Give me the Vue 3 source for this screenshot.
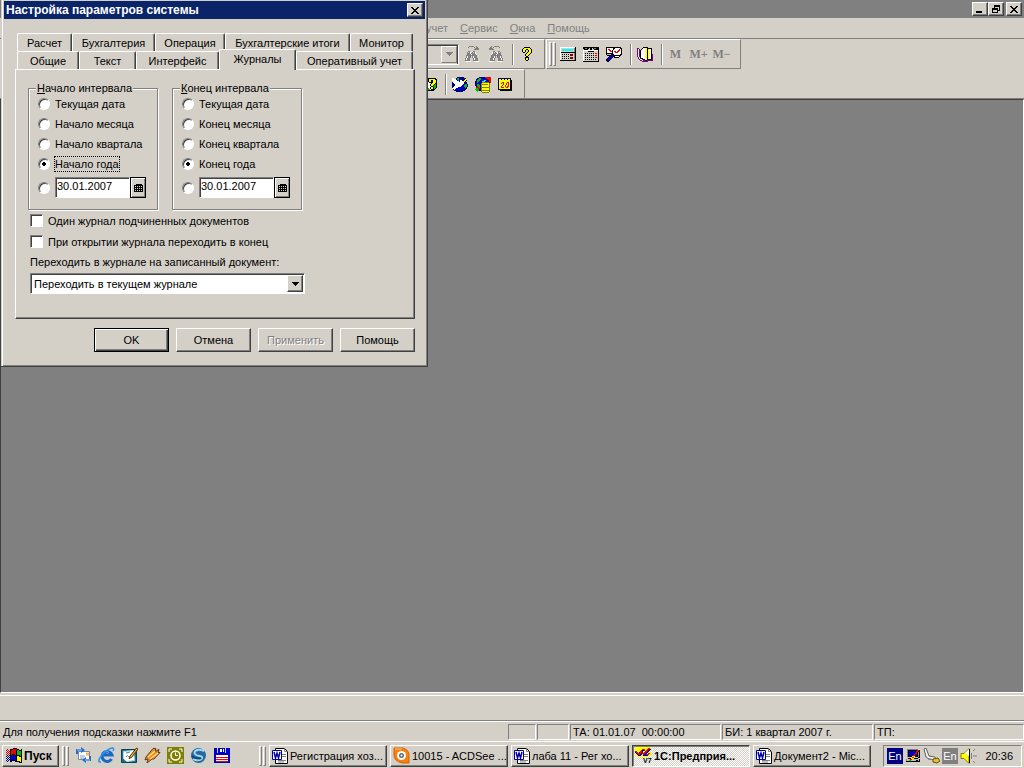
<script setup>
import { h, ref } from 'vue'

const palette = {
  k: '#000', w: '#fff', g: '#808080', s: '#c0c0c0', f: '#d4d0c8', r: '#f00000', m: '#800000',
  y: '#ffff00', b: '#0000c8', n: '#000080', c: '#00ffff', e: '#00c000', o: '#808000', p: '#800080', d: '#404040'
}

const art = {
  close: ['kk....kk', '.kk..kk.', '..kkkk..', '...kk...', '..kkkk..', '.kk..kk.', 'kk....kk'],
  minimize: ['........', '........', '........', '........', '........', 'kkkkkk..', 'kkkkkk..'],
  restore: ['..kkkkkk', '..kkkkkk', '..k....k', 'kkkkkk.k', 'kkkkkk.k', 'k....kkk', 'k....k..', 'kkkkkk..'],
  arrow: ['kkkkkkk', '.kkkkk.', '..kkk..', '...k...'],
  arrowGray: ['ggggggg', '.ggggg.', '..ggg..', '...g...'],
  calendar: ['..kkkkkk.', 'kkkkkkkkk', 'k.k.k.k.k', 'kkkkkkkkk', 'k.k.k.k.k', 'kkkkkkkkk', 'k.k.k.k.k', 'kkkkkkkkk'],
  findNext: ['....ggggg..g...', '...g.....g.gg..', '..........gggg.', '.........ggggg.', '...............', '...gg...gg.....', '..g.gw.g.gw....', '..gggwggggw....', '..ggggwggggw...', '.ggggggggggg...', '.gwggg.gwggg...', '.gwggg.gwggg...', 'gwggg...gwggg..', 'gwggg...gwggg..', 'ggggg...ggggg..', '.wwwww...wwwww.'],
  help: ['..kkkkkk..', '.kyyyyyyk.', 'kyyykkyyyk', 'kyyk..kyyk', 'kyyk..kyyk', '.kk..kyyyk', '....kyyyk.', '...kyyyk..', '...kyyk...', '....kk....', '...kkkk...', '...kyyk...', '...kyyk...', '....kk....'],
  calculator: ['wwwwwwwwwwwwwwwk', 'wfffffffffffffgk', 'wfcccccccccccfgk', 'wfcccccccccccfgk', 'wfffffffffffffgk', 'wkkkkkkkkkkkkkkk', 'wfffffffffffffgk', 'wfkfkfkfkfmmmfgk', 'wfffffffffmmmfgk', 'wfkfkfkfkfffffgk', 'wfffffffffmmmfgk', 'wfkfkfkfkfmmmfgk', 'wfffffffffffffgk', 'kkkkkkkkkkkkkkkk'],
  agenda: ['kkkkkkkkkkkkkkkk', 'kkggkkfkkfkggkkk', '.kkkkf.kk.fkkkkk', 'wwwwwwwwwwwwwwwk', 'wffffkkkkkkffffk', 'wffffffffffffffk', 'wfkfkfkfkfkfrrfk', 'wffffffffffffffk', 'wfkfkfkfkfkfrrfk', 'wffffffffffffffk', 'wfkfkfkfkfkfrrfk', 'wffffffffffffffk', 'wfkfkfkfkfkfkffk', 'wffffffffffffffk', 'kkkkkkkkkkkkkkkk'],
  inspect: ['kkkkkkkkkkkkkkk.', 'kwwwwwwkkwwwwwkk', 'kwrrwwwkwwwwwrwk', 'kwwrrwkwwwwwrrwk', 'kwwwrrkwrrwrrwwk', 'kwwwwwkwwrrrwwwk', 'kkkkkkkwwwwwwwwk', 'ksssskkkwwwwwwkk', '.kkkkbbkkkkkkkk.', '...kbbbkkwwwwk..', '..kbbbk.kkkkk...', '.kbbbk..........', 'kbbbk...........', 'kbbk............', '.kk.............'],
  book: ['......kkkkk.....', 'pp...kwwyykkkkk.', 'pwp.kwwwwykyywk.', 'pwpkwwwwyykwwwk.', 'pwpkwwwwwykyywk.', 'pwpkwwwwyykwwwk.', 'pwpkwwwwwykyywk.', 'pwpkwwwwyykwwwkp', 'pwpkwwwwwykyywkp', 'pwpkwwwwyykwwwkp', '.pwkwwwwyykyywkp', '.pwpkkwwwykwwwkp', '..pwwpkkwykkkkkp', '...ppwppkkpppppp', '.....pppppp.....'],
  catalog: ['...kkkkkkkkk....', '..kekyyyyyykk...', '.keekyykkyyyk...', 'keeekyykkyyyk...', 'keewwkkkkyyyk...', 'kewwwwwkyyykk...', 'kyywwwkyyykek...', 'kyyywwkyykeek...', 'kyyywwwkkeeek...', 'kkwwwwkyykeek...', '.keeewkyykek....', '..keeewkkkk.....', '...kkkkkkk......'],
  bird: ['.....nnnnnnn....', 'ww..neebnnnbnn..', 'wwwwneebbbnnnyy.', 'wwwwwnebwwnnyyk.', '.wwwwwwnwwwyyk..', 'nwwwwwwwwwwwnnn.', 'nnwwwwwwwwwwbnn.', 'nnnwwwwwwwwbbeen', 'nbnwwwwwwwbbeeen', 'nbwwwwwwwbbbeeen', 'nwwwwwbbbbbbben.', 'wwwwbbbbbbbbbnn.', '.nwnbbbbbbnnnn..', '..nnnnnnnnnnn...', '....nnnnnnn.....'],
  globe: ['....nnnnnnrrrrrr', '..nneebbbnnrrrrr', '.nneeebbbbbnnrrr', '.neeebbbbccbnnrr', 'nneebbbcccbbbnrr', 'nbebbbbooooooonr', 'nbbbbboyyyyyyyo.', 'nbeebboooooooyo.', 'nbeeeboyyyyyyyo.', '.nreeboyyyyyyyo.', '.rrrebooooooooo.', '.eerrboyyyyyyyo.', 'eeeenboyyyyyyyo.', '.eeennooooooooo.', '..e...oyyyyyyyo.', '.......ooooooo..'],
  day: ['nnnnnnnnnnnnn..', 'nyynyynyynyyk..', 'kyyyyyyyyyyykk.', 'kyyyyyyyyyyykk.', 'kyyyrryyyrrykk.', 'kyyryryyryrykk.', 'kyyyyryyryrykk.', 'kyyyryyryyrykk.', 'kyyryyyryrrykk.', 'kyyrrryyrryykk.', 'kyyyyyyyyyyykk.', 'kkkkkkkkkkkkkk.', '..kkkkkkkkkkkk.'],
  floppy: ['bbb.bbbbbbb.bbbb', 'bbb.bbwwbwb.bbbb', 'bbb.bbwwbwb.bbbb', 'bbb.bbwwbwb.bbbb', 'bbb.bbbbbbb.bbbb', 'bbbbbbbbbbbbbbbb', 'bbbbbbbbbbbbbbbb', 'bbwwwwwwwwwwwwbb', 'bbwwwwwwwwwwwwbb', 'bbrrrrrrrrrrrrbb', 'bbwwwwwwwwwwwwbb', 'bbrrrrrrrrrrrrbb', 'bbwwwwwwwwwwwwbb', 'bbrrrrrrrrrrrrbb', 'bbbbbbbbbbbbbbbb'],
  windows: ['.......kkkk.....', '.r..kkkrrrrkk..k', 'r.r.krrrrrkeekkk', '.r.rkrrrrrkeeeek', 'r.r.krrrrrkeeeek', '.r.rkrrrrrkeeeek', 'r.r.krkkkrkeeeek', '.k.kkkbbbkkkkkek', 'b.b.kbbbbbkyykkk', '.b.bkbbbbbkyyyyk', 'b.b.kbbbbbkyyyyk', '.b.bkbbbbbkyyyyk', 'b.b.kbkkkbkyyyyk', '.k..kk...kkkkkyk', '.............kkk'],
  company: ['yyyyyyyyyyyyyyyy', 'yyyyyyyyyyyyyrry', 'yyyyyyyrrryyrrbb', 'yyyyyyrbbryrrbbw', 'rryyyrrbyyrrbbyy', 'brrybrrbyrrbbyyy', 'ybrrrrbrrrbbyrry', 'yybrrbbyrbbrrryy', '.yybbbyybbbbbyyy', '..yyyyyyyyyyy...'],
  network: ['..ggggggggggg...', '..gkkkkkkkkkrrk.', '..gkbbbbbbbrrkk.', '..gkbbbbbbbrkgk.', '..gkbbbbbbrrkgk.', '..gkbbbbbrrbkgk.', '..gkbbbbrrbbkgk.', '..gkkkkyyykkkgk.', '..ssssyrryssskk.', '...kkkyyykkkk...', '.gsssrryssssssk.', '.gsseessssskksk.', '.kkkkkkkkkkkkkk.']
}
const Pixel = ({ name }) => {
  const rows = art[name]
  const width = Math.max(...rows.map(r => r.length))
  const cells = []
  rows.forEach((row, y) => [...row].forEach((c, x) => {
    if (palette[c]) cells.push(h('rect', { x, y, width: 1, height: 1, fill: palette[c] }))
  }))
  return h('svg', { width, height: rows.length, viewBox: `0 0 ${width} ${rows.length}`, 'shape-rendering': 'crispEdges', 'aria-hidden': 'true' }, cells)
}
Pixel.props = ['name']

const WordIcon = () => h('svg', { width: 16, height: 16, viewBox: '0 0 16 16', 'aria-hidden': 'true' }, [
  h('path', { d: 'M3.5 .5h9l3 3v12h-12z', fill: '#fff', stroke: '#000' }),
  h('path', { d: 'M12.5 .5v3h3M10 6.5h4M10 8.5h4M6 12.5h8M6 14h6', fill: 'none', stroke: '#808080' }),
  h('path', { d: 'M.5 2.5h9v9h-9z', fill: '#fff', stroke: '#0000a0' }),
  h('path', { d: 'M2 4l1.5 6L5 5l1.5 5L8 4', fill: 'none', stroke: '#0000a0', 'stroke-width': 1.5 })
])

const tabsBack = ['Расчет', 'Бухгалтерия', 'Операция', 'Бухгалтерские итоги', 'Монитор']
const tabsFront = ['Общие', 'Текст', 'Интерфейс', 'Журналы', 'Оперативный учет']
const activeTab = ref('Журналы')

const groups = [
  { id: 'start', key: 'Н', rest: 'ачало интервала', options: ['Текущая дата', 'Начало месяца', 'Начало квартала', 'Начало года'] },
  { id: 'end', key: 'К', rest: 'онец интервала', options: ['Текущая дата', 'Конец месяца', 'Конец квартала', 'Конец года'] }
]
const picked = ref({ start: 3, end: 3 })
const dates = ref({ start: '30.01.2007', end: '30.01.2007' })

const tasks = [
  { icon: 'word', text: 'Регистрация хоз...' },
  { icon: 'acdsee', text: '10015 - ACDSee ...' },
  { icon: 'word', text: 'лаба 11 - Рег хо...' },
  { icon: 'company', text: '1С:Предприя...', active: true },
  { icon: 'word', text: 'Документ2 - Mic...' }
]
</script>

<template>
  <div class="screen">
    <header class="app-title">
      <button class="caption" aria-label="Свернуть"><Pixel name="minimize" /></button>
      <button class="caption" aria-label="Восстановить"><Pixel name="restore" /></button>
      <button class="caption apart" aria-label="Закрыть"><Pixel name="close" /></button>
    </header>

    <nav class="menu">
      <a href="#">учет</a>
      <a href="#"><u>С</u>ервис</a>
      <a href="#"><u>О</u>кна</a>
      <a href="#"><u>П</u>омощь</a>
    </nav>

    <div class="toolbars">
      <div class="bar-row">
        <div class="bar first">
          <span class="combo"><button aria-label="Список"><Pixel name="arrowGray" /></button></span>
          <button class="tool" aria-label="Найти далее"><Pixel name="findNext" /></button>
          <button class="tool flip" aria-label="Найти ранее"><Pixel name="findNext" /></button>
          <i class="sep"></i>
          <button class="tool" aria-label="Справка"><Pixel name="help" /></button>
        </div>
        <div class="bar second">
          <i class="grip"></i><i class="grip"></i>
          <button class="tool" aria-label="Калькулятор"><Pixel name="calculator" /></button>
          <button class="tool" aria-label="Календарь"><Pixel name="agenda" /></button>
          <button class="tool" aria-label="Табло"><Pixel name="inspect" /></button>
          <i class="sep"></i>
          <button class="tool" aria-label="Книга"><Pixel name="book" /></button>
          <i class="sep"></i>
          <button class="tool mem">M</button>
          <button class="tool mem">M+</button>
          <button class="tool mem">M−</button>
        </div>
      </div>
      <div class="bar-row">
        <div class="bar third">
          <button class="tool cut" aria-label="Описание"><Pixel name="catalog" /></button>
          <i class="sep"></i>
          <button class="tool" aria-label="Почта"><Pixel name="bird" /></button>
          <button class="tool" aria-label="Интернет"><Pixel name="globe" /></button>
          <button class="tool" aria-label="Дата"><Pixel name="day" /></button>
        </div>
      </div>
    </div>

    <main class="workspace"></main>
    <div class="window-strip"></div>

    <footer class="status">
      <span class="hint">Для получения подсказки нажмите F1</span>
      <span class="pane"></span>
      <span class="pane"></span>
      <span class="pane">ТА: 01.01.07&nbsp; 00:00:00</span>
      <span class="pane">БИ: 1 квартал 2007 г.</span>
      <span class="pane">ТП:</span>
    </footer>

    <div class="taskbar">
      <button class="start"><Pixel name="windows" />Пуск</button>
      <i class="grip"></i><i class="grip"></i>
      <div class="quick">
        <button aria-label="Outlook Express">
          <svg width="17" height="17" viewBox="0 0 17 17"><path d="M3.500 4.500h11v8h-11z" fill="#fff" stroke="#7088a8" /><path d="M5 9h5M5 11h4" stroke="#8098c0" /><path d="M11 5.500h3v3h-3z" fill="#f8b060" /><path d="M1 7V2h5V0l4 3-4 3V4H3v3z" fill="#2c68c8" /><path d="M16 9v5h-5v2l-4-3 4-3v2h3V9z" fill="#2c68c8" /><path d="M2 3h5M10 13h5" stroke="#a0d0ff" /></svg>
        </button>
        <button aria-label="Internet Explorer">
          <svg width="17" height="17" viewBox="0 0 17 17"><path d="M13.500 12a5 5 0 1 1 .5-4H6" fill="none" stroke="#1868c8" stroke-width="3" /><path d="M5 6.500a4 4 0 0 1 6-1" fill="none" stroke="#70c0ff" /><path d="M3 15c-5 1-.5-7 5-11s9-4 7 0" fill="none" stroke="#3090e8" stroke-width="1.500" /></svg>
        </button>
        <button aria-label="Рабочий стол">
          <svg width="17" height="17" viewBox="0 0 17 17"><path d="M.5 2.500h15v13H.5z" fill="#207088" stroke="#104058" /><path d="M2.500 4.500l10-1 1 10-8 1-3-3z" fill="#fff" stroke="#b0d8e0" /><path d="M5 10c2-4 3 3 5-1M5 6l4-1" stroke="#508090" fill="none" /><path d="M15.500 1L9 9l-1 2.500 2.500-1L17 2z" fill="#f8b030" stroke="#503000" /></svg>
        </button>
        <button aria-label="Winamp">
          <svg width="17" height="17" viewBox="0 0 17 17"><path d="M9 1.500h3l-1 3 4-2-1 3h2L10 12H8l-5 4 1-4-3 1 1-3z" fill="#f08820" stroke="#604020" /><path d="M11 4L4 10M14 6l-8 6" stroke="#ffe080" stroke-width="1.500" /></svg>
        </button>
        <button aria-label="Часы">
          <svg width="17" height="17" viewBox="0 0 17 17"><path d="M0 0h17v17H0z" fill="#808000" /><circle cx="8.500" cy="8.500" r="4.500" fill="none" stroke="#fff" stroke-width="1.500" /><path d="M8.500 5.500v3H11M2 5V2h3M12 2h3v3M2 12v3h3M12 15h3v-3" fill="none" stroke="#fff" /></svg>
        </button>
        <button aria-label="Браузер">
          <svg width="17" height="17" viewBox="0 0 17 17"><circle cx="8.500" cy="8.500" r="7.500" fill="#2868a0" /><path d="M14 4C8 1 3 4 5 7s6 1 7 3-3 5-9 2" fill="none" stroke="#a0d8f0" stroke-width="2" /><path d="M2 9c3 4 8 1 9 3" fill="none" stroke="#104878" stroke-width="2" /></svg>
        </button>
        <button aria-label="Дискета"><Pixel name="floppy" /></button>
      </div>
      <i class="grip"></i><i class="grip"></i>
      <div class="tasks">
        <button v-for="t in tasks" :key="t.text" class="task" :class="{ active: t.active }">
          <WordIcon v-if="t.icon === 'word'" />
          <svg v-else-if="t.icon === 'acdsee'" width="17" height="17" viewBox="0 0 17 17"><path d="M1 1h9q6 2 6 7v8H9Q1 14 1 8z" fill="#f88010" stroke="#d86000" /><path d="M2 2h7" stroke="#ffc070" /><circle cx="8.500" cy="8.500" r="4.500" fill="#fff" /><circle cx="8.500" cy="8.500" r="2.500" fill="#606870" /><circle cx="8.500" cy="8.500" r="1" fill="#fff" /></svg>
          <svg v-else width="17" height="17" viewBox="0 0 17 17"><Pixel name="company" /><text x="8" y="16" class="v7">V7</text></svg>
          <span>{{ t.text }}</span>
        </button>
      </div>
      <div class="tray">
        <span class="lang">En</span>
        <Pixel name="network" />
        <svg width="17" height="16" viewBox="0 0 17 16"><path d="M1 1l2-1 3 8 6 1 1 3-7-1-3-2z" fill="#f0f0f0" stroke="#606060" /><path d="M5 11l8 1" stroke="#808080" /><path d="M10 11l5-1 2 3-3 2-4-1z" fill="#e8c030" stroke="#605000" /></svg>
        <span class="lang muted">En</span>
        <svg width="17" height="16" viewBox="0 0 17 16"><path d="M1 5.500h3l5-5v15l-5-5H1z" fill="#ffff00" stroke="#808000" /><path d="M5 5l4-4v7z" fill="#fff" /><path d="M9.500 1v14" stroke="#000" /><path d="M11.500 5v6M13 3l2-2M13 8h4M13 13l2 2" stroke="#808080" /></svg>
        <time>20:36</time>
      </div>
    </div>

    <section class="dialog" role="dialog" aria-labelledby="dialog-title">
      <div class="dialog-title">
        <h1 id="dialog-title">Настройка параметров системы</h1>
        <button class="caption" aria-label="Закрыть"><Pixel name="close" /></button>
      </div>
      <div class="dialog-body">
        <div role="tablist">
          <div class="tabs back">
            <button v-for="t in tabsBack" :key="t" class="tab" role="tab" :aria-selected="t === activeTab">{{ t }}</button>
          </div>
          <div class="tabs front">
            <button v-for="t in tabsFront" :key="t" class="tab" role="tab" :aria-selected="t === activeTab">{{ t }}</button>
          </div>
        </div>

        <div class="page" role="tabpanel">
          <div class="groups">
            <fieldset v-for="g in groups" :key="g.id">
              <legend><u>{{ g.key }}</u>{{ g.rest }}</legend>
              <label v-for="(o, i) in g.options" :key="o" class="option">
                <input v-model="picked[g.id]" type="radio" :name="g.id" :value="i">
                <span :class="{ focused: g.id === 'start' && i === 3 }">{{ o }}</span>
              </label>
              <div class="option date">
                <input v-model="picked[g.id]" type="radio" :name="g.id" :value="4" aria-label="Указанная дата">
                <input v-model="dates[g.id]" type="text" aria-label="Дата">
                <button aria-label="Выбрать дату"><Pixel name="calendar" /></button>
              </div>
            </fieldset>
          </div>
          <label class="check"><input type="checkbox">Один журнал подчиненных документов</label>
          <label class="check"><input type="checkbox">При открытии журнала переходить в конец</label>
          <label class="caption-text" for="go">Переходить в журнале на записанный документ:</label>
          <div class="select">
            <select id="go"><option>Переходить в текущем журнале</option></select>
            <span class="drop"><Pixel name="arrow" /></span>
          </div>
        </div>

        <div class="actions">
          <button class="push default">OK</button>
          <button class="push">Отмена</button>
          <button class="push" disabled>Применить</button>
          <button class="push">Помощь</button>
        </div>
      </div>
    </section>
  </div>
</template>

<style>
body { margin: 0; background: #d4d0c8; }
</style>

<style scoped>
* { box-sizing: border-box; }
.screen {
  --face: #d4d0c8;
  --dialog: 428px;
  position: relative;
  display: flex;
  flex-direction: column;
  min-height: 100vh;
  overflow: hidden;
  background: var(--face);
  color: #000;
  font: 11px/14px "Liberation Sans", Arial, sans-serif;
}
svg { display: block; flex: none; }
button { margin: 0; padding: 0; border: 0; background: none; color: inherit; font: inherit; }
i { flex: none; }

.app-title { display: flex; justify-content: flex-end; align-items: flex-start; height: 18px; padding: 2px 2px 0 0; background: #808080; }
.caption {
  display: flex; align-items: center; justify-content: center; width: 16px; height: 14px;
  background: var(--face); border: 1px solid; border-color: #fff #404040 #404040 #fff; box-shadow: inset -1px -1px #808080;
}
.caption.apart { margin-left: 2px; }
.menu { display: flex; gap: 12px; height: 21px; padding: 3px 0 0 426px; border-bottom: 1px solid #808080; }
.menu a { color: #808080; text-decoration: none; }

.toolbars { height: 60px; border-bottom: 1px solid #808080; }
.bar-row { display: flex; height: 30px; padding-left: var(--dialog); gap: 1px; }
.bar { display: flex; align-items: center; border-top: 1px solid #fff; border-right: 1px solid #808080; border-bottom: 1px solid #808080; }
.first { width: 117px; }
.second { width: 195px; border-left: 1px solid #fff; }
.third { width: 97px; border-bottom: 0; }
.tool { display: flex; flex: none; align-items: center; justify-content: center; width: 23px; height: 22px; }
.flip svg { transform: scaleX(-1); }
.tool.cut { width: 12px; justify-content: flex-end; overflow: hidden; }
.mem { color: #808080; font: bold 12px/14px "Liberation Serif", serif; }
.sep { width: 2px; height: 21px; margin: 0 1px 0 5px; border-left: 1px solid #808080; border-right: 1px solid #fff; }
.grip { width: 3px; height: 24px; margin-left: 1px; border: 1px solid; border-color: #fff #808080 #808080 #fff; }
.second .grip:first-child { margin-left: 2px; }
.combo { display: flex; width: 31px; height: 21px; margin-right: 2px; padding: 1px; justify-content: flex-end; border: 1px solid; border-color: #808080 #fff #fff; border-left: 0; box-shadow: inset -1px 1px #404040; }
.combo button { display: flex; align-items: center; justify-content: center; width: 16px; border: 1px solid; border-color: #fff #808080 #808080 #fff; }

.workspace { flex: 1; background: #808080; border-top: 1px solid #404040; border-left: 1px solid #404040; border-right: 1px solid #fff; border-bottom: 1px solid #fff; }
.window-strip { height: 28px; border-bottom: 1px solid #808080; box-shadow: inset 0 2px var(--face), inset 0 3px #fff; }

.status { display: grid; grid-template-columns: 504px 28px 32px 151px 151px 1fr; column-gap: 1px; height: 20px; padding: 2px 0 2px 3px; border-top: 1px solid #fff; }
.hint { align-self: center; }
.pane { padding: 0 2px; border: 1px solid; border-color: #808080 #fff #fff #808080; white-space: nowrap; }

.taskbar { display: flex; align-items: center; height: 27px; padding: 1px 2px 0; border-top: 1px solid #fff; }
.taskbar .grip { height: 20px; }
.start, .task {
  display: flex; align-items: center; height: 22px; gap: 2px; padding: 0 2px; white-space: nowrap;
  border: 1px solid; border-color: #fff #404040 #404040 #fff; box-shadow: inset -1px -1px #808080;
}
.start { width: 57px; margin-right: 2px; padding: 0 3px; font-weight: bold; font-size: 12px; }
.quick { display: flex; gap: 2px; width: 189px; padding-left: 4px; }
.quick button { display: flex; width: 21px; align-items: center; justify-content: center; }
.tasks { display: flex; flex: 1; gap: 3px; min-width: 0; margin: 0 12px 0 3px; }
.task { flex: 1 1 0; min-width: 0; overflow: hidden; }
.task.active { border-color: #404040 #fff #fff #404040; box-shadow: inset 1px 1px #808080; font-weight: bold; background: repeating-conic-gradient(#fff 0 25%, #d4d0c8 0 50%) 0 0 / 2px 2px; }
.v7 { font: bold 7px "Liberation Sans", Arial, sans-serif; }
.tray { display: flex; flex: none; align-items: center; gap: 2px; width: 139px; height: 22px; padding: 0 4px 0 3px; border: 1px solid; border-color: #808080 #fff #fff #808080; }
.lang { width: 16px; height: 16px; background: #000080; color: #fff; text-align: center; line-height: 16px; }
.lang.muted { background: #808080; }
.tray time { margin-left: auto; padding-right: 4px; }

.dialog {
  position: absolute; top: 0; left: 1px; width: 427px; padding: 1px 1px 0 2px; background: var(--face);
  border: solid; border-width: 0 1px 1px 0; border-color: #404040; box-shadow: inset 1px 0 var(--face), inset 2px 0 #fff, inset -1px -1px #808080;
}
.dialog-title { display: flex; align-items: center; justify-content: space-between; height: 18px; margin: 0 1px; padding: 0 2px; background: #0a246a; color: #fff; }
.dialog-title h1 { margin: 0; font-size: 12px; line-height: 18px; }
.dialog-title .caption { color: #000; }
.dialog-body { padding: 14px 11px 14px 12px; }
.tabs { position: relative; display: grid; height: 18px; padding: 0 2px; }
.back { grid-template-columns: 55fr 83fr 70fr 125fr 63fr; }
.front { grid-template-columns: 62fr 57fr 83fr 77fr 117fr; }
.tab { height: 18px; white-space: nowrap; border: 1px solid; border-color: #fff #404040 transparent #fff; border-bottom: 0; border-radius: 2px 2px 0 0; box-shadow: inset -1px 0 #808080; }
.tab[aria-selected="true"] { z-index: 1; height: 21px; margin: -2px 0 -1px; padding: 0 0 2px; background: var(--face); }
.page { height: 250px; padding: 11px 12px; border: 1px solid; border-color: #fff #404040 #404040 #fff; box-shadow: inset -1px -1px #808080; }
.groups { display: flex; gap: 14px; }
fieldset { width: 130px; height: 129px; margin: 0; padding: 0 0 0 9px; border: 1px solid #808080; box-shadow: 1px 1px #fff, inset 1px 1px #fff; }
legend { margin-left: -2px; padding: 0 1px; background: var(--face); }
.option { display: flex; align-items: center; height: 20px; white-space: nowrap; }
.option:first-of-type { margin-top: -1px; }
.option span { padding: 0; margin-left: 4px; border: 1px dotted transparent; }
.option span.focused { border-color: #000; }
input { margin: 0; }
input[type="radio"] {
  appearance: none; flex: none; width: 12px; height: 12px; border: 1px solid; border-color: #808080 #fff #fff #808080; border-radius: 50%;
  background: #fff; box-shadow: inset 1px 1px #404040;
}
input[type="radio"]:checked { background: radial-gradient(circle, #000 0 2px, #fff 2px); }
.option.date { height: 21px; margin-top: 3px; }
.date input[type="text"] { width: 75px; height: 21px; margin-left: 5px; padding: 0 1px 3px; border: 1px solid; border-color: #808080 #fff #fff #808080; border-radius: 0; box-shadow: inset 1px 1px #404040; font: inherit; outline: 0; background: #fff; }
.date button { display: flex; align-items: center; justify-content: center; width: 16px; height: 21px; border: 1px solid #000; box-shadow: inset 1px 1px #fff, inset -1px -1px #808080; }
.check { display: flex; align-items: center; height: 21px; gap: 5px; margin-left: 2px; }
input[type="checkbox"] { appearance: none; width: 13px; height: 13px; background: #fff; border: 1px solid; border-color: #808080 #fff #fff #808080; box-shadow: inset 1px 1px #404040; }
.caption-text { display: block; margin: 3px 0 4px 2px; }
.select { position: relative; width: 275px; height: 21px; margin-left: 2px; }
select { appearance: none; width: 100%; height: 100%; padding: 0 20px 0 3px; background: #fff; color: #000; border: 1px solid; border-color: #808080 #fff #fff #808080; border-radius: 0; box-shadow: inset 1px 1px #404040; font: inherit; outline: 0; }
.drop { position: absolute; top: 2px; right: 2px; bottom: 2px; display: flex; align-items: center; justify-content: center; width: 16px; background: var(--face); border: 1px solid; border-color: #fff #404040 #404040 #fff; box-shadow: inset -1px -1px #808080; pointer-events: none; }
.actions { display: flex; justify-content: flex-end; gap: 7px; margin-top: 9px; }
.push { width: 75px; height: 24px; border: 1px solid; border-color: #fff #404040 #404040 #fff; box-shadow: inset -1px -1px #808080; }
.push.default { border-color: #000; box-shadow: inset 1px 1px #fff, inset -1px -1px #404040, inset -2px -2px #808080; }
.push:disabled { color: #808080; text-shadow: 1px 1px #fff; }
</style>
